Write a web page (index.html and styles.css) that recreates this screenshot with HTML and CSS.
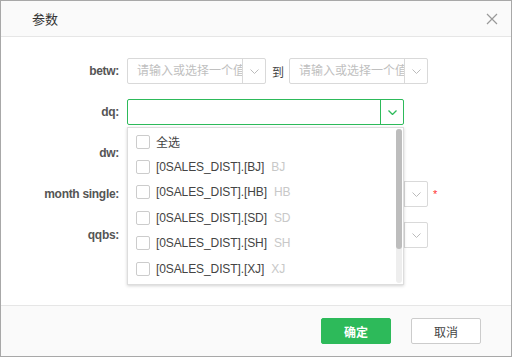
FILE: index.html
```html
<!DOCTYPE html>
<html lang="zh">
<head>
    <meta charset="UTF-8">
    <title>参数</title>
    <link rel="stylesheet" href="styles.css">
</head>
<body>
    <div class="dialog">
        <div class="dialog-header">
            <span class="title">参数</span>
            <svg class="close" width="12" height="12" viewBox="0 0 12 12"><path d="M1 1L11 11M11 1L1 11" stroke="#999" stroke-width="1.2" fill="none"/></svg>
        </div>

        <div class="dialog-body">
            <div class="row">
                <label>betw:</label>
                <div class="field w-short">
                    <span class="placeholder">请输入或选择一个值</span>
                    <span class="arrow"><svg width="9" height="5" viewBox="0 0 9 5"><path d="M0.5 0.5L4.5 4.5L8.5 0.5" stroke="#bbb" fill="none"/></svg></span>
                </div>
                <span class="sep">到</span>
                <div class="field w-short">
                    <span class="placeholder">请输入或选择一个值</span>
                    <span class="arrow"><svg width="9" height="5" viewBox="0 0 9 5"><path d="M0.5 0.5L4.5 4.5L8.5 0.5" stroke="#bbb" fill="none"/></svg></span>
                </div>
            </div>

            <div class="row">
                <label>dq:</label>
                <div class="field w-mid active">
                    <span class="placeholder"></span>
                    <span class="arrow"><svg width="9" height="5" viewBox="0 0 9 5"><path d="M0.5 0.5L4.5 4.5L8.5 0.5" stroke="#2dba5a" stroke-width="1.3" fill="none"/></svg></span>

                    <div class="dropdown">
                        <ul class="options">
                            <li><span class="check"></span>全选</li>
                            <li><span class="check"></span>[0SALES_DIST].[BJ]<span class="code">BJ</span></li>
                            <li><span class="check"></span>[0SALES_DIST].[HB]<span class="code">HB</span></li>
                            <li><span class="check"></span>[0SALES_DIST].[SD]<span class="code">SD</span></li>
                            <li><span class="check"></span>[0SALES_DIST].[SH]<span class="code">SH</span></li>
                            <li><span class="check"></span>[0SALES_DIST].[XJ]<span class="code">XJ</span></li>
                        </ul>
                        <div class="scrollbar"><div class="thumb"></div></div>
                    </div>
                </div>
            </div>

            <div class="row">
                <label>dw:</label>
                <div class="field w-mid">
                    <span class="placeholder"></span>
                    <span class="arrow"><svg width="9" height="5" viewBox="0 0 9 5"><path d="M0.5 0.5L4.5 4.5L8.5 0.5" stroke="#bbb" fill="none"/></svg></span>
                </div>
            </div>

            <div class="row">
                <label>month single:</label>
                <div class="field w-long">
                    <span class="placeholder"></span>
                    <span class="arrow"><svg width="9" height="5" viewBox="0 0 9 5"><path d="M0.5 0.5L4.5 4.5L8.5 0.5" stroke="#bbb" fill="none"/></svg></span>
                </div>
                <span class="required">*</span>
            </div>

            <div class="row">
                <label>qqbs:</label>
                <div class="field w-long">
                    <span class="placeholder"></span>
                    <span class="arrow"><svg width="9" height="5" viewBox="0 0 9 5"><path d="M0.5 0.5L4.5 4.5L8.5 0.5" stroke="#bbb" fill="none"/></svg></span>
                </div>
            </div>
        </div>

        <div class="dialog-footer">
            <button class="btn btn-primary">确定</button>
            <button class="btn">取消</button>
        </div>
    </div>
</body>
</html>
```

FILE: styles.css
```css
body {
    margin: 0;
    font-family: "Liberation Sans", "Noto Sans CJK SC", sans-serif;
    font-size: 12px;
    color: #444;
}
.dialog {
    width: 512px;
    height: 357px;
    box-sizing: border-box;
    border: 1px solid #a8a8a8;
    display: flex;
    flex-direction: column;
    background: #fff;
}
.dialog-header {
    height: 35px;
    background: #fafafa;
    border-bottom: 1px solid #e6e6e6;
    display: flex;
    align-items: center;
    justify-content: space-between;
    padding: 0 13px 0 31px;
}
.title {
    font-size: 13px;
    color: #333;
}
.dialog-body {
    flex: 1;
    padding-top: 21px;
}
.row {
    display: flex;
    align-items: center;
    height: 26px;
    margin-bottom: 15px;
}
.row label {
    width: 118px;
    text-align: right;
    font-weight: bold;
    color: #555;
    margin-right: 8px;
    letter-spacing: -0.3px;
}
.field {
    position: relative;
    height: 26px;
    box-sizing: border-box;
    border: 1px solid #d9d9d9;
    border-radius: 2px;
    display: flex;
    background: #fff;
}
.w-short { width: 139px; }
.w-mid { width: 277px; }
.w-long { width: 301px; }
.field.active {
    border-color: #2dba5a;
}
.placeholder {
    flex: 1;
    padding-left: 9px;
    line-height: 24px;
    color: #c0c0c0;
    white-space: nowrap;
    overflow: hidden;
}
.arrow {
    width: 22px;
    border-left: 1px solid #d9d9d9;
    display: flex;
    align-items: center;
    justify-content: center;
}
.active .arrow {
    border-left-color: #2dba5a;
}
.sep {
    margin: 0 5px 0 6px;
    color: #444;
}
.required {
    color: #f33;
    margin-left: 5px;
    font-size: 11px;
}
.dropdown {
    position: absolute;
    top: 27px;
    left: -1px;
    width: 277px;
    height: 158px;
    box-sizing: border-box;
    border: 1px solid #ddd;
    background: #fff;
    box-shadow: 0 1px 3px rgba(0, 0, 0, 0.18);
    display: flex;
    z-index: 2;
}
.options {
    list-style: none;
    margin: 0;
    padding: 1px 0 0 8px;
    flex: 1;
}
.options li {
    height: 25.4px;
    display: flex;
    align-items: center;
    color: #444;
    white-space: nowrap;
    letter-spacing: -0.1px;
}
.check {
    width: 12px;
    height: 12px;
    border: 1px solid #ccc;
    border-radius: 2px;
    margin-right: 6px;
}
.code {
    color: #c8c8c8;
    margin-left: 7px;
}
.scrollbar {
    width: 6px;
    margin: 1px 1px 1px 0;
    background: #eee;
    border-radius: 3px;
}
.thumb {
    height: 120px;
    background: #bdbdbd;
    border-radius: 3px;
}
.dialog-footer {
    height: 50px;
    background: #fafafa;
    border-top: 1px solid #e6e6e6;
    display: flex;
    align-items: center;
    justify-content: flex-end;
    padding-right: 30px;
    gap: 20px;
}
.btn {
    width: 70px;
    height: 26px;
    border: 1px solid #ccc;
    border-radius: 2px;
    background: #fff;
    color: #444;
    font-family: inherit;
    font-size: 12px;
    cursor: pointer;
}
.btn-primary {
    background: #2dba5a;
    border-color: #2dba5a;
    color: #fff;
    font-weight: bold;
}
```
